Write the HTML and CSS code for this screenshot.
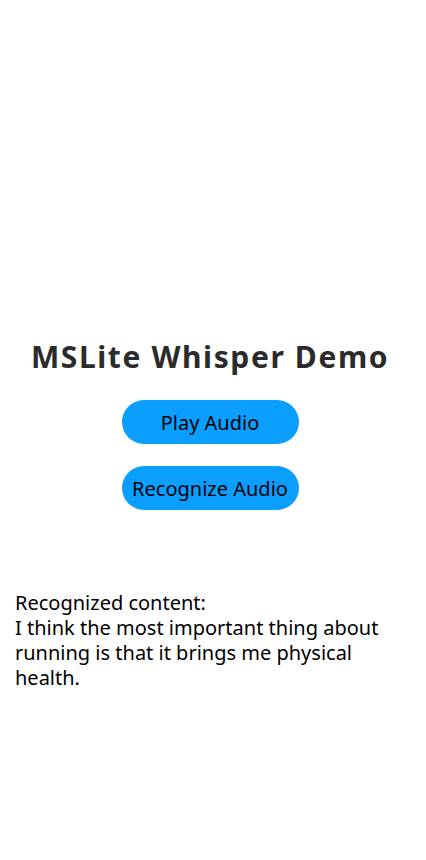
FILE: index.html
```html
<!DOCTYPE html>
<html>
<head>
<meta charset="utf-8">
<link rel="stylesheet" href="styles.css">
</head>
<body>
<div class="page">
  <h1 class="title">MSLite Whisper Demo</h1>
  <div class="buttons">
    <button class="btn">Play Audio</button>
    <button class="btn">Recognize Audio</button>
  </div>
  <div class="result">Recognized content:<br>I think the most important thing about running is that it brings me physical health.</div>
</div>
</body>
</html>
```

FILE: styles.css
```css
html, body {
  margin: 0;
  padding: 0;
  background: #ffffff;
}
.page {
  width: 420px;
  height: 860px;
  display: flex;
  flex-direction: column;
  align-items: center;
  padding-top: 337px;
  box-sizing: border-box;
  font-family: "Noto Sans", sans-serif;
}
.title {
  margin: 0;
  height: 40px;
  line-height: 40px;
  font-family: "Noto Sans", sans-serif;
  font-size: 30px;
  font-weight: 700;
  letter-spacing: 1.6px;
  color: #2b2b2b;
}
.buttons {
  margin-top: 23px;
  display: flex;
  flex-direction: column;
  gap: 22px;
}
.btn {
  width: 177px;
  height: 44px;
  border: none;
  border-radius: 22px;
  background: #0a9eff;
  color: #000000;
  font-family: "Noto Sans", sans-serif;
  font-size: 20px;
  padding: 0;
}
.result {
  align-self: stretch;
  margin-top: 80px;
  padding: 0 15px;
  font-size: 20px;
  line-height: 25px;
  color: #000000;
}
```
